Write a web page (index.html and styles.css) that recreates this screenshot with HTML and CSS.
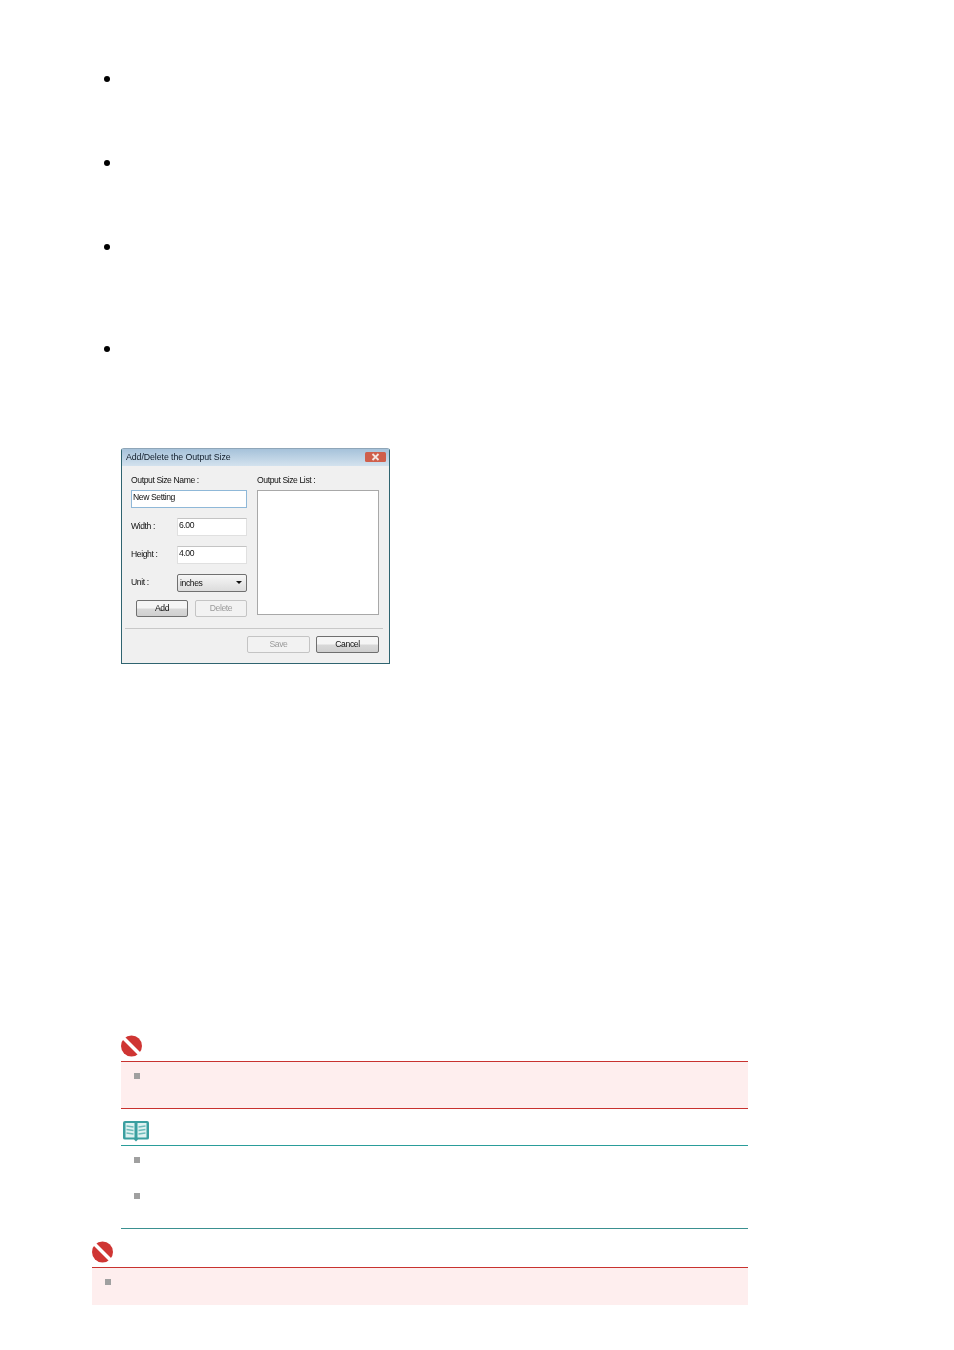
FILE: index.html
```html
<!DOCTYPE html>
<html lang="en">
<head>
    <meta charset="UTF-8">
    <meta name="viewport" content="width=device-width, initial-scale=1.0">
    <title>Add/Delete the Output Size</title>
    <link rel="stylesheet" href="styles.css">
</head>
<body>

    <div class="page">
        <ul class="dots">
            <li class="dot"></li>
            <li class="dot"></li>
            <li class="dot tall"></li>
            <li class="dot tall"></li>
        </ul>

        <div class="dialog">
            <div class="title-bar">
                <span>Add/Delete the Output Size</span>
                <svg class="close" width="21" height="10" viewBox="0 0 21 10">
                    <rect width="21" height="10" rx="1.5" fill="#cf5f4b"/>
                    <path d="M7.5 2 L13.5 8 M13.5 2 L7.5 8" stroke="#f4e6e2" stroke-width="1.8"/>
                </svg>
            </div>
            <div class="dialog-body">
                <div class="col-left">
                    <div class="label">Output Size Name :</div>
                    <div class="field focused">New Setting</div>
                    <div class="row">
                        <span class="label">Width :</span>
                        <div class="field short">6.00</div>
                    </div>
                    <div class="row">
                        <span class="label">Height :</span>
                        <div class="field short">4.00</div>
                    </div>
                    <div class="row">
                        <span class="label">Unit :</span>
                        <div class="select">inches<span class="arrow"></span></div>
                    </div>
                    <div class="btn-row">
                        <div class="btn add">Add</div>
                        <div class="btn add disabled">Delete</div>
                    </div>
                </div>
                <div class="col-right">
                    <div class="label">Output Size List :</div>
                    <div class="listbox"></div>
                </div>
            </div>
            <div class="separator"></div>
            <div class="dialog-footer">
                <div class="btn wide disabled">Save</div>
                <div class="btn wide">Cancel</div>
            </div>
        </div>

        <div class="note-group">
            <div class="note-head">
                <svg class="icon" width="21" height="22" viewBox="0 0 21 22">
                    <circle cx="10.5" cy="11" r="10.5" fill="#cf3533"/>
                    <path d="M2 2.500 L19 19.500" stroke="#fff" stroke-width="3.6"/>
                </svg>
            </div>
            <div class="note-box important first-box">
                <div class="square"></div>
            </div>

            <div class="note-head book-head">
                <svg class="icon" width="28" height="22" viewBox="0 0 28 22">
                    <path d="M1 3 Q1 1 3 1 L25 1 Q27 1 27 3 L27 18 Q27 19.500 25 19.500 L16 19.500 L14 21.500 L12 19.500 L3 19.500 Q1 19.500 1 18 Z" fill="#3a9fa0"/>
                    <path d="M3.500 3 L12.500 3 L12.500 17.500 L3.500 17.500 Z M15.500 3 L24.500 3 L24.500 17.500 L15.500 17.500 Z" fill="#dff2f1"/>
                    <path d="M4.500 6 L11.500 7 M4.500 9.500 L11.500 10.500 M4.500 13 L11.500 14 M16.500 7 L23.500 6 M16.500 10.500 L23.500 9.500 M16.500 14 L23.500 13" stroke="#6dbcbb" stroke-width="1.500"/>
                </svg>
            </div>
            <div class="note-box info">
                <div class="square"></div>
                <div class="square"></div>
            </div>
        </div>

        <div class="note-group outer">
            <div class="note-head">
                <svg class="icon" width="21" height="22" viewBox="0 0 21 22">
                    <circle cx="10.5" cy="11" r="10.5" fill="#cf3533"/>
                    <path d="M2 2.500 L19 19.500" stroke="#fff" stroke-width="3.6"/>
                </svg>
            </div>
            <div class="note-box important last-box">
                <div class="square"></div>
            </div>
        </div>
    </div>

</body>
</html>
```

FILE: styles.css
```css
body {
    margin: 0;
    background-color: white;
    font-family: "Liberation Sans", Arial, sans-serif;
}
.page {
    padding: 76px 0 45px 92px;
    width: 656px;
}
.dots {
    list-style: none;
    margin: 0;
    padding: 0;
}
.dot {
    height: 84px;
}
.dot.tall {
    height: 102px;
}
.dot::before {
    content: "";
    display: block;
    width: 6px;
    height: 6px;
    margin-left: 12px;
    border-radius: 50%;
    background-color: black;
}

/* dialog */
.dialog {
    box-sizing: border-box;
    width: 269px;
    height: 216px;
    margin-left: 29px;
    background-color: #f0f0f0;
    border: 1px solid #2f6470;
    border-top-color: #8fa6b8;
    border-radius: 3px 3px 0 0;
    color: #111;
    font-size: 8.6px;
    letter-spacing: -0.4px;
    filter: blur(0.5px);
}
.title-bar {
    display: flex;
    justify-content: space-between;
    align-items: center;
    box-sizing: border-box;
    height: 17px;
    padding: 0 3px 1px 4px;
    background: linear-gradient(#a6c2da, #d3e2ee);
    font-size: 8.8px;
    letter-spacing: -0.08px;
    color: #0f1c2a;
}
.close {
    display: block;
}
.dialog-body {
    display: flex;
    gap: 10px;
    padding: 8px 10px 0 9px;
}
.col-left {
    width: 116px;
}
.col-right {
    width: 122px;
}
.label {
    height: 12px;
    line-height: 12px;
    margin-bottom: 4px;
}
.row .label {
    margin-bottom: 2px;
}
.row {
    display: flex;
    align-items: center;
    justify-content: space-between;
    margin-top: 10px;
}
.field {
    box-sizing: border-box;
    height: 18px;
    line-height: 13px;
    padding-left: 1px;
    background-color: white;
    border: 1px solid #e0e0e0;
    border-top-color: #c4c4c4;
}
.field.focused {
    border-color: #8fb8d8;
}
.field.short {
    width: 70px;
}
.select {
    box-sizing: border-box;
    display: flex;
    justify-content: space-between;
    align-items: center;
    width: 70px;
    height: 18px;
    padding: 0 4px 1px 2px;
    background: linear-gradient(#f6f6f6, #dcdcdc);
    border: 1px solid #707070;
    border-radius: 2px;
}
.arrow {
    border-left: 3px solid transparent;
    border-right: 3px solid transparent;
    border-top: 3px solid #111;
}
.btn-row {
    display: flex;
    justify-content: space-between;
    margin: 8px 0 0 5px;
}
.btn {
    box-sizing: border-box;
    height: 17px;
    line-height: 15px;
    text-align: center;
    background: linear-gradient(#f5f5f5 45%, #d8d8d8 55%, #cfcfcf);
    border: 1px solid #6f6f6f;
    border-radius: 2px;
}
.btn.add {
    width: 52px;
}
.btn.wide {
    width: 63px;
}
.btn.disabled {
    background: #f2f2f2;
    border-color: #c4c4c4;
    color: #9a9a9a;
}
.listbox {
    box-sizing: border-box;
    height: 125px;
    background-color: white;
    border: 1px solid #a8a8a8;
}
.separator {
    height: 1px;
    margin: 11px 6px 0 3px;
    background-color: #c8c8c8;
}
.dialog-footer {
    display: flex;
    justify-content: flex-end;
    gap: 6px;
    padding: 7px 10px 0 0;
}

/* note blocks */
.note-group {
    width: 627px;
    margin: 371px 0 0 29px;
}
.note-group.outer {
    width: 656px;
    margin: 12px 0 0 0;
}
.note-head {
    height: 26px;
}
.note-head .icon {
    display: block;
    filter: blur(0.3px);
}
.book-head {
    height: 25px;
    margin-top: 11px;
    padding-left: 1px;
}
.note-box {
    box-sizing: border-box;
}
.important {
    background-color: #feeeee;
    border-top: 1px solid #c8322f;
}
.first-box {
    height: 48px;
    padding: 11px 0 0 13px;
    border-bottom: 1px solid #c8322f;
}
.last-box {
    height: 38px;
    padding: 11px 0 0 13px;
}
.info {
    height: 84px;
    padding: 11px 0 0 13px;
    border-top: 1px solid #2a9d9a;
    border-bottom: 1px solid #3a9090;
}
.square {
    width: 6px;
    height: 6px;
    margin-bottom: 30px;
    background-color: #a0a0a0;
}
```
